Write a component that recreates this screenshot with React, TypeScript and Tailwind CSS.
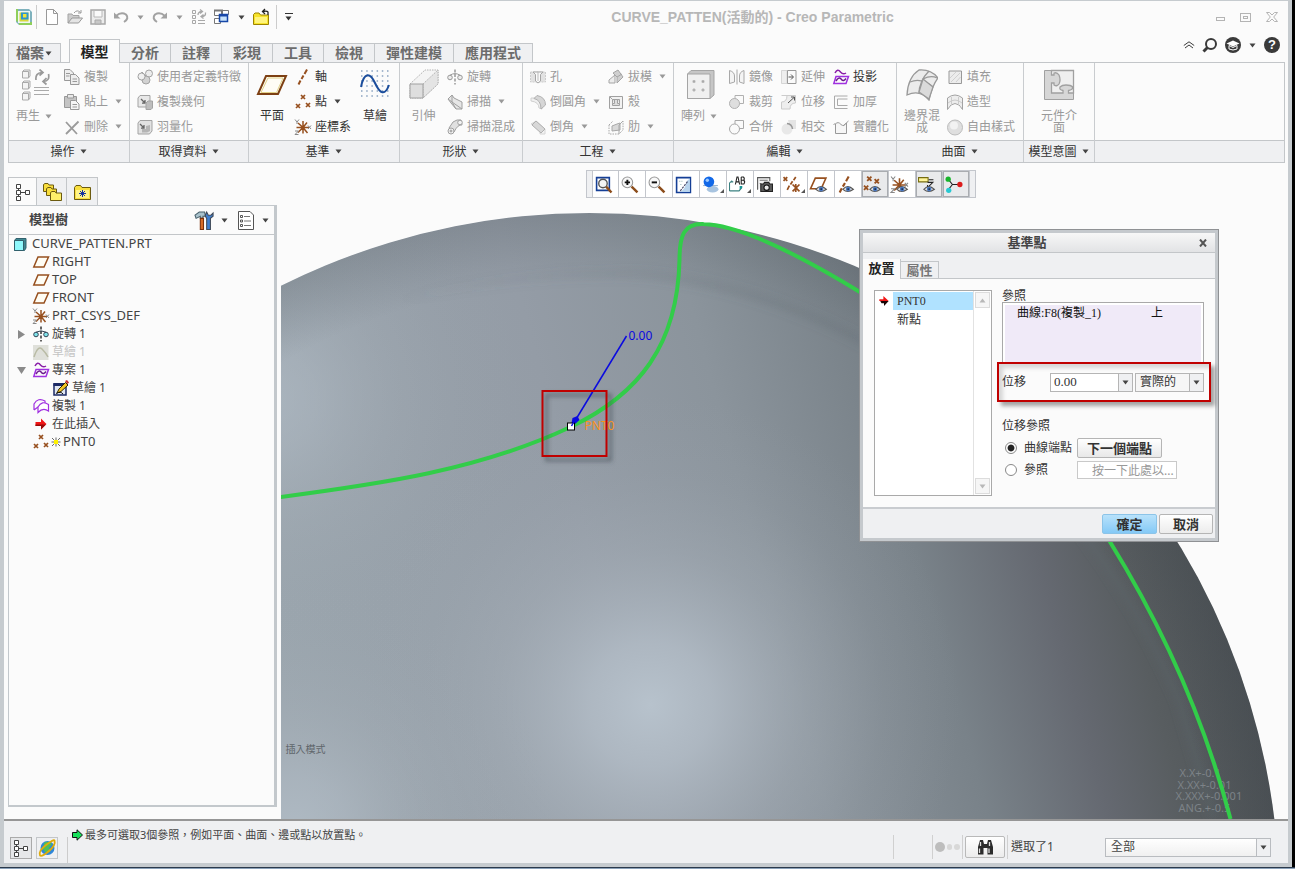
import type { ReactNode } from "react";

const G = "#a3a3a3";
const BROWN = "#97501f";
const PURPLE = "#a030e0";

/* ---------- icons, 16px grid ---------- */

const eye = (
  <g>
    <path d="M5.500 12.500Q10 7.500 15.500 12.500Q10 16.500 5.500 12.500Z" fill="#e4e4e4" stroke="#555" strokeWidth="1" />
    <circle cx="10.500" cy="12.300" r="2.200" fill="#4a78c0" />
    <circle cx="10.500" cy="12.300" r="0.800" fill="#123" />
  </g>
);

const csysLines = (
  <g fill="none" strokeWidth="1.500">
    <path d="M8 8.500H14M8 8.500L3 4M8 8.500L3 13.500M8 8.500V2M8 8.500L12 3.500M8 8.500L12.500 14M8 8.500H1.500M8 8.500V14.500" stroke={BROWN} />
    <path d="M0 0.500L2 3L4 0.500M2 3V5M0 12H3.500L0 15.500H3.500M13 6.500L16 10M16 6.500L13 10" stroke="#888" strokeWidth="1" />
  </g>
);

const points = (color: string) => (
  <path d="M6 1L10 5M10 1L6 5M1 10L5 14M5 10L1 14M11 9L15 13M15 9L11 13" stroke={color} strokeWidth="1.700" fill="none" />
);

const cubeWithArrow = (
  <g>
    <path d="M1 4L3 1.500H13V11L11 13H1Z" fill="#e8e8e8" stroke={G} />
    <path d="M4 5L8 9M8 6V9.200H5" stroke="#666" fill="none" strokeWidth="1.300" />
    <path d="M9 9L11 7H15.500V14L14 15.500H9Z" fill="#bdbdbd" stroke={G} />
  </g>
);

const ICONS: Record<string, ReactNode> = {
  app: (
    <g>
      <path d="M0 0H13L16 3V16H3L0 13Z" fill="#7fb2bd" />
      <path d="M0 0H2V13L0 12ZM3 13H16V16H3Z" fill="#8fcf5a" />
      <path d="M2 2H14V14H2Z" fill="#eef6f4" />
      <path d="M3.500 3.500H12.500V12.500H3.500Z" fill="#d9d93c" />
      <path d="M5 3.500H12.500V10.500H5Z" fill="#2d97cc" />
      <path d="M7 5H10.500V8.500H7Z" fill="#f3e338" />
    </g>
  ),
  newFile: <path d="M2.500 0.500H9.500L13.500 4.500V15.500H2.500ZM9.500 0.500V4.500H13.500" fill="#fff" stroke="#999" />,
  open: (
    <g>
      <path d="M1 14V5H5L6 6.500H12V9" fill="#ccc" stroke={G} />
      <path d="M1 14L5 9H15.500L11.500 14Z" fill="#e4e4e4" stroke="#999" />
      <path d="M7 4Q10 0 13.500 3.500M14 1V4H11" fill="none" stroke="#999" />
    </g>
  ),
  save: (
    <g>
      <path d="M1 1H15V15H1Z" fill="#ececec" stroke="#a8a8a8" strokeWidth="1.500" />
      <path d="M4 1.500H12V8H4Z" fill="#fafafa" stroke="#b8b8b8" />
      <path d="M5 11H11V15H5Z" fill="#c8c8c8" stroke="#aaa" />
    </g>
  ),
  undo: (
    <g>
      <path d="M3 7Q8 2.500 13 5.500Q16.500 9.500 11 13" fill="none" stroke="#a2a2a2" strokeWidth="2" />
      <path d="M1 3.500V9.500H7.500Z" fill="#a2a2a2" />
    </g>
  ),
  redo: (
    <g>
      <path d="M13 7Q8 2.500 3 5.500Q-0.500 9.500 5 13" fill="none" stroke="#a2a2a2" strokeWidth="2" />
      <path d="M15 3.500V9.500H8.500Z" fill="#a2a2a2" />
    </g>
  ),
  regenSmall: (
    <g fill="none" stroke="#a8a8a8">
      <path d="M1.500 1.500H4.500V4.500H1.500ZM1.500 6.500H4.500V9.500H1.500ZM1.500 11.500H4.500V14.500H1.500ZM7 11.500H14M7 14.500H14" />
      <path d="M7 6Q7 2.500 11 2.500M9 0.500L11.500 2.500L9 4.500M14.500 3.500Q15 7.500 10.500 7.500M12.500 5.500L10 7.500L12.500 9.500" strokeWidth="1.300" />
    </g>
  ),
  windows: (
    <g>
      <path d="M0.500 1.500H8.500V6.500H0.500ZM7.500 1.500H14.500V5.500H7.500ZM0.500 9.500H6.500V14.500H0.500Z" fill="#fff" stroke="#777" />
      <path d="M0 0.500H9V2.500H0Z" fill="#777" />
      <path d="M5.500 5.500H13.500V12.500H5.500Z" fill="#c7e2fa" stroke="#1747a8" strokeWidth="1.500" />
      <path d="M5 5H14V7.500H5Z" fill="#1747a8" />
    </g>
  ),
  folderBack: (
    <g>
      <path d="M0.500 15.500V5.500L2 4H6L7.500 6H15.500V15.500Z" fill="#f7e32a" stroke="#9c8300" />
      <path d="M2 8H14V14H2Z" fill="#fff47d" />
      <path d="M15 6V3Q14 1.500 10 2.500M12 0L9.500 2.600L12 5" fill="none" stroke="#222" strokeWidth="1.300" />
    </g>
  ),
  copy: (
    <g fill="#eee" stroke="#999">
      <path d="M0.500 0.500H6L9.500 4V11.500H0.500Z" />
      <path d="M6.500 5.500H11.500L15 9V15.500H6.500Z" />
      <path d="M2 4.500H6M2 7H5.500M8.500 10H13M8.500 12.500H13" />
    </g>
  ),
  paste: (
    <g stroke="#999">
      <path d="M0.500 2.500H12.500V13.500H0.500Z" fill="#c4c4c4" />
      <path d="M3.500 4V0.500H9.500V4Z" fill="#e8e8e8" />
      <path d="M6.500 6.500H11.500L15 10V15.500H6.500Z" fill="#f6f6f6" />
      <path d="M8.500 10.500H13M8.500 13H13" />
    </g>
  ),
  remove: <path d="M2 3L13 15M14.500 2.500L2 15" stroke="#9b9b9b" strokeWidth="1.800" fill="none" />,
  udf: (
    <g stroke={G}>
      <path d="M1 9L5 3L9 7L7 12Z" fill="#ddd" />
      <circle cx="12" cy="4.500" r="3.500" fill="#ececec" />
      <circle cx="9" cy="11" r="4" fill="#d2d2d2" />
      <circle cx="4.500" cy="7.500" r="3.500" fill="#f0f0f0" />
    </g>
  ),
  copyGeom: cubeWithArrow,
  shrink: (
    <g>
      <path d="M1 4L3 1.500H15V12L12.500 15H1Z" fill="#e2e2e2" stroke={G} />
      <path d="M3 5L7 9M7 6V9.200H4" stroke="#666" fill="none" strokeWidth="1.300" />
      <path d="M9 7L13 6V12L10 13.500H5V10H9Z" fill="#b5b5b5" />
    </g>
  ),
  axis: <path d="M12 0.500L9.500 5M8.500 6.500L6.500 10M5.500 11.500L3.500 15.500" stroke={BROWN} strokeWidth="2" fill="none" />,
  points: points(BROWN),
  csys: csysLines,
  plane: <path d="M5 3H15.500L11 13H0.800Z" fill="#fffdf4" stroke={BROWN} strokeWidth="1.500" />,
  revolve: (
    <g fill="#ececec" stroke="#999">
      <path d="M8 0.500V15.500" strokeDasharray="3 1.500" strokeWidth="1.500" />
      <circle cx="3" cy="8.500" r="2.300" />
      <circle cx="13" cy="8.500" r="2.300" />
      <path d="M3 6.200Q8 3 13 6.200" fill="none" />
    </g>
  ),
  revolveTree: (
    <g fill="#7fe3ea" stroke="#345">
      <path d="M8 0.500V15.500" strokeDasharray="3 1.500" strokeWidth="1.500" stroke="#333" />
      <circle cx="3" cy="8.500" r="2.300" />
      <circle cx="13" cy="8.500" r="2.300" />
      <path d="M3 6.200Q8 3.500 13 6.200" fill="none" />
    </g>
  ),
  sweep: (
    <g stroke="#a0a0a0">
      <path d="M1 5L5 1L7 4L15 8V15H9L4 9Z" fill="#e6e6e6" />
      <path d="M5 1V8L9 15M5 8L15 15M1 5L5 8" fill="none" />
    </g>
  ),
  sweptBlend: (
    <g stroke="#a0a0a0">
      <path d="M2 9L6 3Q10 0 14 1L15 6Q11 5 7 13Z" fill="#e0e0e0" />
      <circle cx="4" cy="12" r="3" fill="#f3f3f3" />
      <circle cx="4" cy="12" r="1" fill="#ccc" />
      <circle cx="13" cy="3.500" r="2.300" fill="#f3f3f3" />
    </g>
  ),
  hole: (
    <g>
      <path d="M0.500 3H15.500V13H0.500Z" fill="#e2e2e2" stroke="#ccc" strokeDasharray="2 1" />
      <path d="M3 3H13L10.500 5.500V12L8 14L5.500 12V5.500Z" fill="#fafafa" stroke="#a5a5a5" />
      <path d="M8 3V12" stroke="#bbb" />
    </g>
  ),
  round: (
    <g stroke="#b0b0b0">
      <path d="M1 4H8Q12 6 12 15L9 14Q9 8 1 7Z" fill="#f0f0f0" stroke="#d0d0d0" />
      <path d="M7 1.500Q15.500 3 15.500 11L11 15Q11 6 4 4.500Z" fill="#d6d6d6" />
    </g>
  ),
  chamfer: (
    <g stroke="#b0b0b0">
      <path d="M1 5L6 2L15 10V15H10V10L5 6Z" fill="#f2f2f2" stroke="#d6d6d6" />
      <path d="M6 2L15 10L11 14L2 6Z" fill="#d8d8d8" />
    </g>
  ),
  draft: (
    <g stroke="#a5a5a5">
      <path d="M1 11L7 6V14H1Z" fill="#ececec" />
      <path d="M5 4L10 1L15 8L9 14V8Z" fill="#cfcfcf" />
      <path d="M5 4L9 8L14 5" fill="none" />
    </g>
  ),
  shell: (
    <g fill="#f2f2f2" stroke="#a0a0a0">
      <path d="M1.500 2.500H14.500V14.500H1.500Z" />
      <path d="M4.500 5.500H11.500V11.500H4.500Z" fill="#dcdcdc" />
      <path d="M6.500 5.500V9.500H4.500M9.500 5.500V9.500H11.500M2 3L4.500 5.500" />
    </g>
  ),
  rib: (
    <g stroke="#a8a8a8" fill="none">
      <path d="M1 6L5 2M1 6V15H11L15 11V2" strokeDasharray="1.500 1" />
      <path d="M4 12V7L9 5L12 4V11Z" fill="#d8d8d8" />
      <path d="M11 15V6L15 2" />
    </g>
  ),
  mirror: (
    <g stroke="#a8a8a8" fill="#f4f4f4">
      <path d="M0.500 1.500Q5.500 3 5.500 7V13L0.500 14.500ZM15 1.500Q10.500 3 10.500 7V13L15 14.500Z" />
      <path d="M8 0.500V15.500" />
    </g>
  ),
  trim: (
    <g stroke="#b0b0b0">
      <path d="M6 5V1.500H14.500V9.500H10" fill="#fafafa" />
      <circle cx="5.500" cy="9.500" r="5" fill="#dedede" />
    </g>
  ),
  merge: (
    <g stroke="#a8a8a8" fill="#fafafa">
      <path d="M6 5V1.500H14.500V9.500H10" />
      <circle cx="5.500" cy="10" r="5" />
    </g>
  ),
  extend: (
    <g>
      <path d="M0.500 1.500H6V14.500H0.500Z" fill="#eee" stroke="#d5d5d5" />
      <path d="M6.500 1.500H15V14.500H6.500Z" fill="#fafafa" stroke="#999" />
      <path d="M7.500 8H12M10 5.500L12.500 8L10 10.500" stroke="#555" fill="none" />
    </g>
  ),
  offset: (
    <g>
      <path d="M0.500 1.500H14.500V9Q9 9 9 15H0.500V8Q6 8 6 1.500" fill="#eee" stroke="#ccc" />
      <path d="M7 9L13 3.500M10 3H13.500V6.500" stroke="#555" fill="none" />
    </g>
  ),
  intersect: (
    <g>
      <path d="M7 1H15V10H9Z" fill="#e4e4e4" />
      <circle cx="6" cy="10" r="5.500" fill="#e8e8e8" />
      <path d="M6 4.500Q11 5 11.500 10" stroke="#999" fill="none" strokeWidth="1.500" />
    </g>
  ),
  project: (
    <g fill="none" stroke={PURPLE} strokeWidth="1.500">
      <path d="M2 4Q4.500 -1 7.500 3Q10 6 13 4" stroke="#8a1fa8" />
      <path d="M3 7.500H15.500L13 14.500H0.800Z" />
      <path d="M3 12Q6 7 8.500 10.500Q10.500 13 13 9.500" stroke="#6b1a8c" />
    </g>
  ),
  thicken: <path d="M14.500 2H1.500V14.500H14.500M14.500 5H4.500V11.500H14.500" fill="none" stroke="#aaa" />,
  solidify: <path d="M2.500 14.500V5Q5 2 8 5.500Q10.500 8 13.500 4V14.500ZM0.500 6L2.500 4M10 7L15.500 2" fill="#f6f6f6" stroke="#999" />,
  fill: (
    <g>
      <path d="M2 2H14.500V14.500H2Z" fill="#ececec" stroke="#999" />
      <path d="M3 9L9 3M4 13L13 4M9 13L13.500 8" stroke="#d0d0d0" />
    </g>
  ),
  style: (
    <g stroke="#a3a3a3">
      <path d="M0.500 4Q8 -2 15.500 4V15.500Q13 12 12 11Q8 8 4 11L0.500 15.500Z" fill="#ededed" />
      <path d="M4.500 3V11M11.500 3V11M1 9Q8 3 15 9" fill="none" stroke="#ccc" />
    </g>
  ),
  freestyle: (
    <g>
      <circle cx="8" cy="8.500" r="7.500" fill="#dfdfdf" stroke="#bcbcbc" />
      <circle cx="7" cy="6.500" r="4" fill="#f2f2f2" />
    </g>
  ),
  tree: (
    <g fill="#fff" stroke="#444">
      <path d="M3.500 5V12M5 8.500H10" />
      <path d="M1.500 0.500H5.500V4.500H1.500ZM1.500 6.500H5.500V10.500H1.500ZM10.500 6.500H14.500V10.500H10.500ZM1.500 12.500H5.500V16.500H1.500Z" />
    </g>
  ),
  folders: (
    <g fill="#f8dd3c" stroke="#6b5a10">
      <path d="M-0.500 7.500V0.500L1 -0.500H4L5 1H9.500V7.500Z" />
      <path d="M2.500 11.500V4.500L4 3.500H7L8 5H12.500V11.500Z" />
      <path d="M6.500 16.500V8.500L8 7.500H11L12 9H17.500V16.500Z" fill="#fff06a" />
    </g>
  ),
  favorites: (
    <g>
      <path d="M0.500 15.500V3.500L2 1.500H6.500L8 3.500H16.500V15.500Z" fill="#f9df3e" stroke="#6b5a10" />
      <path d="M2 6H15V14H2Z" fill="#fff48a" />
      <path d="M8.500 6V13M5 9.500H12M6 7L11 12M11 7L6 12" stroke="#1533a0" />
    </g>
  ),
  part: (
    <g stroke="#31606c">
      <path d="M1.500 4.500L3 2.500H13V12L11.500 14.500H1.500Z" fill="#3f8791" />
      <path d="M1.500 4.500H10.500V14.500H1.500Z" fill="#8ff8fb" />
    </g>
  ),
  sketchOff: (
    <g>
      <path d="M0 1H15.500V16H0Z" fill="#dfe0da" />
      <path d="M1 13Q5 1 9 5T15 13" stroke="#b9bba5" strokeWidth="1.500" fill="none" />
    </g>
  ),
  sketchEdit: (
    <g>
      <path d="M1 4H13V15H1Z" fill="#dfe6f2" stroke="#1c2b66" strokeWidth="1.500" />
      <path d="M0.500 3H13.500V6H0.500Z" fill="#1c2b66" />
      <path d="M4 13L6 9L12.500 2.500L15 5L8 11.500Z" fill="#f5c623" stroke="#332800" />
      <path d="M12 1L14 0L16 2.500L14.500 4Z" fill="#c83232" />
      <path d="M3 13.500Q8 11 10 14" stroke="#111" fill="none" />
    </g>
  ),
  copyQuilt: (
    <g fill="none" stroke={PURPLE} strokeWidth="1.200">
      <path d="M1 12V6Q5 -1 12 3V5M1 12L5 9" />
      <path d="M5 14.500V9Q9 2 15.500 6.500V13Q10 9 5 14.500Z" fill="#fff" />
    </g>
  ),
  insertArrow: (
    <g>
      <path d="M2.500 6H8V2.500L13.500 8L8 13.500V10H2.500Z" fill="#f01616" />
      <path d="M2.500 8.500H13L8 13.500V10H2.500Z" fill="#9a0808" />
    </g>
  ),
  activeArrow: (
    <g>
      <path d="M0.500 5H7V0L15.500 8H0.500Z" fill="#f01616" />
      <path d="M2 8H15.500L8 16V11.500H4Z" fill="#180404" />
    </g>
  ),
  hammers: (
    <g>
      <path d="M0 3L4 0H9L10 4H7.500V6H5V4L1 6Z" fill="#a9c2cc" stroke="#48606c" />
      <path d="M5 6H8V16.500H5Z" fill="#d86c28" stroke="#7c3008" />
      <path d="M11 6V16.500H14.500V6L17 4V1L15 3H12.500L11 0L9.500 3.500Z" fill="#3f7fd0" stroke="#404a58" />
    </g>
  ),
  listDoc: (
    <g>
      <path d="M1.500 -0.500H13L16.500 3V17.500H1.500Z" fill="#fff" stroke="#555" />
      <path d="M7 4.500H13M7 9H14M7 13.500H14" stroke="#777" />
      <path d="M3.500 3.500H5.500V5.500H3.500ZM3.500 8H5.500V10H3.500ZM3.500 12.500H5.500V14.500H3.500Z" fill="none" stroke="#555" />
    </g>
  ),
  zoomFit: (
    <g>
      <path d="M1.500 1.500H13.500V13.500H1.500Z" fill="#fff" stroke="#153f96" strokeWidth="1.500" />
      <circle cx="7.500" cy="7" r="4" fill="#f4f4f4" stroke="#555" strokeWidth="1.300" />
      <path d="M10.500 10L15.500 15.500" stroke="#8c4d1b" strokeWidth="2.300" />
    </g>
  ),
  zoomIn: (
    <g>
      <circle cx="6" cy="6" r="5" fill="#f8f8f8" stroke="#999" />
      <path d="M3.500 6H8.500M6 3.500V8.500" stroke="#111" strokeWidth="1.800" />
      <path d="M10 10L15.500 15.500" stroke="#8c4d1b" strokeWidth="2.300" />
    </g>
  ),
  zoomOut: (
    <g>
      <circle cx="6" cy="6" r="5" fill="#f8f8f8" stroke="#999" />
      <path d="M3.500 6H8.500" stroke="#111" strokeWidth="1.800" />
      <path d="M10 10L15.500 15.500" stroke="#8c4d1b" strokeWidth="2.300" />
    </g>
  ),
  repaint: (
    <g>
      <path d="M1.500 1.500H14.500V15.500H1.500Z" fill="#fff" stroke="#153f96" strokeWidth="1.500" />
      <path d="M14 2V15H5Q10 12 11 5Z" fill="#b8d4ee" />
      <path d="M4 5H8M5 8H7" stroke="#9bb" strokeDasharray="1 1" />
      <path d="M5 14L12 5" stroke="#446" strokeDasharray="2 1" />
    </g>
  ),
  shade: (
    <g>
      <ellipse cx="10" cy="12.500" rx="5.500" ry="3" fill="#a8c4e0" />
      <path d="M1 9H15" stroke="#9bb4cc" />
      <circle cx="6.500" cy="5.500" r="5" fill="#1168e8" />
      <circle cx="5" cy="4" r="1.600" fill="#9cc9ff" />
    </g>
  ),
  saved: (
    <g>
      <path d="M0.500 14V6.500L3 4.500M0.500 6.500L2 5.500H4M0.500 14H9.500L12 11" fill="none" stroke="#3b8181" />
      <path d="M10 13V9.500H12.500V11Z" fill="#1a9696" />
      <path d="M6 8L7.500 1H8.500L10 8M7 5.500H9.500M11.500 1V7.500H14Q15.500 5.500 14 4H12M14 4Q15 2 13.500 1H11.500" stroke="#222" fill="none" />
    </g>
  ),
  viewMgr: (
    <g>
      <path d="M1.500 13V1.500H13V5" fill="#f2f2f2" stroke="#555" />
      <path d="M3.500 4H11M3.500 7H5" stroke="#777" />
      <path d="M4.500 7.500H7L8 6H12L13 7.500H15.500V14.500H4.500Z" fill="#5b5b5b" stroke="#222" />
      <circle cx="10" cy="11" r="2.500" fill="#e8e8e8" stroke="#111" />
    </g>
  ),
  datumAll: (
    <g stroke={BROWN} strokeWidth="1.600" fill="none">
      <path d="M0.500 1L4 4.500M4 1L0.500 4.500M12 1L10 4M9 5L7 8M6 9L4 13" />
      <path d="M9 8L15.500 14.500M15.500 8L9 14.500M12 7.500V15" />
    </g>
  ),
  planeEye: (
    <g>
      <path d="M5 2H15L10.500 12H0.500Z" fill="none" stroke={BROWN} strokeWidth="1.500" />
      {eye}
    </g>
  ),
  axisEye: (
    <g>
      <path d="M11 0.500L8.500 5M7.500 6.500L5.500 10M4.500 11.500L2.500 15.500" stroke={BROWN} strokeWidth="2" fill="none" />
      {eye}
    </g>
  ),
  pointsEye: (
    <g>
      <path d="M3 0.500L7 4.500M7 0.500L3 4.500M0 9L4 13M4 9L0 13M10 3L14 7M14 3L10 7" stroke={BROWN} strokeWidth="1.700" fill="none" />
      {eye}
    </g>
  ),
  csysEye: (
    <g>
      {csysLines}
      {eye}
    </g>
  ),
  annoEye: (
    <g>
      <path d="M0.500 1.500H9.500V5.500H0.500Z" fill="#fff59a" stroke="#776d10" />
      <path d="M10 3.500H14.500M9 6H14L9 11M9 8.500V11H12" stroke="#222" fill="none" />
      {eye}
    </g>
  ),
  spin: (
    <g>
      <path d="M3 3L7 8H13M7 8L3 13" stroke="#222" fill="none" />
      <circle cx="3" cy="3" r="2.500" fill="#18b52c" />
      <circle cx="14" cy="8" r="2.500" fill="#dc1c1c" />
      <circle cx="3.500" cy="13.500" r="2.500" fill="#28c9d2" />
    </g>
  ),
  globe: (
    <g>
      <circle cx="8.500" cy="8" r="7" fill="#2f86d8" />
      <path d="M5 3Q9 0 13 4L10 8L11 12Q6 14 4 9Z" fill="#4fbf5a" />
      <path d="M1 15.500Q-1 11 7 5T15.500 0.500Q17 5 10 11T1 15.500Z" fill="none" stroke="#e0ac0c" strokeWidth="1.800" />
    </g>
  ),
  binoculars: (
    <g>
      <path d="M1 8L3 1H6L7 5H10L11 1H14L16 8V15.500H10.500V9H6.500V15.500H1Z" fill="#2b2b2b" />
      <path d="M2.500 9.500V14M3.500 3V7M12 9.500V14M12.500 3V7" stroke="#ddd" strokeWidth="1.300" />
    </g>
  ),
};

const BIG_ICONS: Record<string, ReactNode> = {
  regen: (
    <g fill="#f4f4f4" stroke="#aaa">
      <path d="M3.500 2.500L5 1H11V7L9.500 9H3.500ZM3.500 13.500L5 12H11V18L9.500 20H3.500ZM3.500 24.500L5 23H11V29L9.500 31H3.500Z" />
      <path d="M3.500 2.500H9.500V9M3.500 13.500H9.500V20M3.500 24.500H9.500V31M15 18.500H30M15 21.500H30M15 25.500H30" fill="none" />
      <path d="M17 11Q16 4 23 3.500M20.500 0.500L24 3.500L20.500 6.500M29.500 5Q31 12 24.500 12.500M27.500 9L24 12.500L27.500 15.500" fill="none" stroke="#999" strokeWidth="1.700" />
    </g>
  ),
  plane: (
    <g>
      <path d="M10 7H30L22 25H2Z" fill="#fffdf6" stroke="#7d4014" strokeWidth="2" />
      <path d="M12 9H27L20.500 23.500H5Z" fill="none" stroke="#e2d28a" strokeWidth="1" />
    </g>
  ),
  sketch: (
    <g>
      {[2, 7, 12, 17, 22, 27].map((y) => (
        <path key={y} d={`M2 ${y}H31`} stroke="#8aa3c0" strokeWidth="1.500" strokeDasharray="1.500 3.700" />
      ))}
      <path d="M2 18C5 3 11 3 16 14S26 27 30 16" fill="none" stroke="#1b4d9c" strokeWidth="2" />
    </g>
  ),
  extrude: (
    <g stroke="#b3b3b3">
      <path d="M2 15L17 1H30V15L15 29H2Z" fill="#f4f4f4" strokeDasharray="1.500 1" />
      <path d="M15 15L30 1V15L15 29Z" fill="#e4e4e4" strokeDasharray="1.500 1" />
      <path d="M2 15H15V29H2Z" fill="#dedede" stroke="#a0a0a0" />
    </g>
  ),
  pattern: (
    <g stroke="#a5a5a5">
      <path d="M3.500 5L7 1.500H30V26L26 29.500H3.500Z" fill="#c6c6c6" />
      <path d="M3.500 5H26V29.500H3.500Z" fill="#f0f0f0" />
      <path d="M9 11.500H11V13.500H9ZM18 11.500H20V13.500H18ZM9 20H11V22H9ZM18 20H20V22H18Z" fill="#999" stroke="#bbb" />
    </g>
  ),
  boundary: (
    <g stroke="#999" fill="#ececec" strokeWidth="1.300">
      <path d="M1 26Q2 8 13 1Q25 0 32 9Q26 17 23 31Q14 20 1 26Z" />
      <path d="M4 13Q15 8 27 18M13 25Q13 12 23 2M17 10Q25 6 31 9" fill="none" />
      <path d="M17 10L27 18L23 30L13 23Z" fill="#dadada" />
    </g>
  ),
  component: (
    <g stroke="#a0a0a0">
      <path d="M1.500 1.500H30.500V30.500H1.500Z" fill="#d6d6d6" />
      <path
        d="M8.500 1.500V6H11V4Q14 3 16 6Q18 11 16 15Q14 18 11 16V14H8.500V24H20V21.500Q16 21 17 18Q19 16 23 16Q28 16 29.500 18Q30 21 25.500 21.500V24H30.500V1.500Z"
        fill="#efefef"
        strokeWidth="1.300"
      />
    </g>
  ),
};

function Icon({ name, size = "size-4" }: { name: string; size?: string }) {
  return (
    <svg viewBox="0 0 16 16" className={`${size} shrink-0 overflow-visible`} aria-hidden="true">
      {ICONS[name]}
    </svg>
  );
}

function Caret({ className = "text-[#444]" }: { className?: string }) {
  return (
    <svg viewBox="0 0 9 5" className={`h-[5px] w-[9px] shrink-0 ${className}`} aria-hidden="true">
      <path d="M1.500 0.500H7.500L4.500 4.500Z" fill="currentColor" />
    </svg>
  );
}

/* ---------- ribbon ---------- */

type Item = { icon: string; label: string; caret?: boolean; on?: boolean };

function Big({ icon, lines, caret, on, width }: { icon: string; lines: string[]; caret?: boolean; on?: boolean; width: string }) {
  return (
    <button className={`flex shrink-0 flex-col items-center justify-start pt-[5px] ${width} ${on ? "text-[#333]" : "text-[#999]"}`}>
      <svg viewBox="0 0 32 32" className="size-8 shrink-0" aria-hidden="true">
        {BIG_ICONS[icon]}
      </svg>
      <span className="mt-[9px] flex items-center gap-1 whitespace-nowrap leading-3">
        <span>
          {lines.map((line) => (
            <span key={line} className="block">{line}</span>
          ))}
        </span>
        {caret && <Caret className={on ? "text-[#444]" : "text-[#999]"} />}
      </span>
    </button>
  );
}

function Column({ items, width = "" }: { items: Item[]; width?: string }) {
  return (
    <div className={`flex shrink-0 flex-col ${width}`}>
      {items.map((item) => (
        <button key={item.label} className={`flex h-[25px] items-center gap-1 whitespace-nowrap ${item.on ? "text-[#333]" : "text-[#999]"}`}>
          <Icon name={item.icon} />
          <span>{item.label}</span>
          {item.caret && (
            <span className="pl-0.5">
              <Caret className={item.on ? "text-[#444]" : "text-[#999]"} />
            </span>
          )}
        </button>
      ))}
    </div>
  );
}

function Group({ title, width, children }: { title: string; width: string; children: ReactNode }) {
  return (
    <section className={`flex shrink-0 flex-col border-r border-[#c9cccf] ${width}`}>
      <div className="flex h-[77px] pt-px">{children}</div>
      <button className="flex h-[22px] items-center justify-center gap-1 border-t border-[#c3c6c9] bg-[#eff0f2] whitespace-nowrap text-[#333]">
        {title}
        <Caret />
      </button>
    </section>
  );
}

function Ribbon() {
  return (
    <div className="mr-[3px] ml-1 flex border border-[#c3c6c9] bg-[#fbfbfb] text-xs">
      <Group title="操作" width="w-[121px]">
        <Big icon="regen" lines={["再生"]} caret width="w-[55px] pr-1" />
        <Column
          items={[
            { icon: "copy", label: "複製" },
            { icon: "paste", label: "貼上", caret: true },
            { icon: "remove", label: "刪除", caret: true },
          ]}
        />
      </Group>
      <Group title="取得資料" width="w-[119px]">
        <Column
          width="pl-[7px]"
          items={[
            { icon: "udf", label: "使用者定義特徵" },
            { icon: "copyGeom", label: "複製幾何" },
            { icon: "shrink", label: "羽量化" },
          ]}
        />
      </Group>
      <Group title="基準" width="w-[151px]">
        <Big icon="plane" lines={["平面"]} on width="w-[46px]" />
        <Column
          width="w-14"
          items={[
            { icon: "axis", label: "軸", on: true },
            { icon: "points", label: "點", caret: true, on: true },
            { icon: "csys", label: "座標系", on: true },
          ]}
        />
        <Big icon="sketch" lines={["草繪"]} on width="w-12" />
      </Group>
      <Group title="形狀" width="w-[123px]">
        <Big icon="extrude" lines={["引伸"]} width="w-[47px]" />
        <Column
          items={[
            { icon: "revolve", label: "旋轉" },
            { icon: "sweep", label: "掃描", caret: true },
            { icon: "sweptBlend", label: "掃描混成" },
          ]}
        />
      </Group>
      <Group title="工程" width="w-[151px]">
        <Column
          width="w-[85px] pl-[7px]"
          items={[
            { icon: "hole", label: "孔" },
            { icon: "round", label: "倒圓角", caret: true },
            { icon: "chamfer", label: "倒角", caret: true },
          ]}
        />
        <Column
          items={[
            { icon: "draft", label: "拔模", caret: true },
            { icon: "shell", label: "殼" },
            { icon: "rib", label: "肋", caret: true },
          ]}
        />
      </Group>
      <Group title="編輯" width="w-[223px]">
        <Big icon="pattern" lines={["陣列"]} caret width="w-[55px] pr-1" />
        <Column
          width="w-[52px]"
          items={[
            { icon: "mirror", label: "鏡像" },
            { icon: "trim", label: "裁剪" },
            { icon: "merge", label: "合併" },
          ]}
        />
        <Column
          width="w-[52px]"
          items={[
            { icon: "extend", label: "延伸" },
            { icon: "offset", label: "位移" },
            { icon: "intersect", label: "相交" },
          ]}
        />
        <Column
          items={[
            { icon: "project", label: "投影", on: true },
            { icon: "thicken", label: "加厚" },
            { icon: "solidify", label: "實體化" },
          ]}
        />
      </Group>
      <Group title="曲面" width="w-[127px]">
        <Big icon="boundary" lines={["邊界混", "成"]} width="w-[50px]" />
        <Column
          items={[
            { icon: "fill", label: "填充" },
            { icon: "style", label: "造型" },
            { icon: "freestyle", label: "自由樣式" },
          ]}
        />
      </Group>
      <Group title="模型意圖" width="w-[71px]">
        <Big icon="component" lines={["元件介", "面"]} width="w-[70px]" />
      </Group>
      <div className="flex flex-1 flex-col">
        <div className="flex-1" />
        <div className="h-[22px] border-t border-[#c3c6c9] bg-[#eff0f2]" />
      </div>
    </div>
  );
}

/* ---------- title bar and tabs ---------- */

function Tool({ name, label }: { name: string; label: string }) {
  return (
    <button aria-label={label} className="shrink-0">
      <Icon name={name} />
    </button>
  );
}

function TitleBar() {
  return (
    <header className="flex h-8 items-center pr-2.5 pl-3">
      <div className="flex items-center gap-[7px]">
        <span className="flex h-6 items-center border-r border-[#ccc] pr-1">
          <Icon name="app" />
        </span>
        <Tool name="newFile" label="新建" />
        <Tool name="open" label="開啟" />
        <Tool name="save" label="儲存" />
        <Tool name="undo" label="復原" />
        <Caret className="text-[#999]" />
        <Tool name="redo" label="重做" />
        <Caret className="text-[#999]" />
        <Tool name="regenSmall" label="再生" />
        <Tool name="windows" label="視窗" />
        <Caret />
        <Tool name="folderBack" label="關閉" />
        <span className="h-6 border-r border-[#ccc]" />
        <button aria-label="自訂" className="flex flex-col items-center gap-0.5">
          <span className="h-px w-2 bg-[#333]" />
          <Caret className="text-[#333]" />
        </button>
      </div>
      <h1 className="flex-1 pr-1 text-center font-['Liberation_Sans','Noto_Sans_CJK_TC',sans-serif] text-[14px] font-bold text-[#b7b7b7]">
        CURVE_PATTEN(活動的) - Creo Parametric
      </h1>
      <div className="flex items-center gap-[15px] text-[#b4b4b4]">
        <button aria-label="最小化" className="mt-1 h-1 w-[9px] border border-current" />
        <button aria-label="最大化" className="flex h-[9px] w-[11px] items-center justify-center border border-current">
          <span className="h-[3px] w-[5px] border border-current" />
        </button>
        <button aria-label="關閉視窗">
          <svg viewBox="0 0 12 10" className="h-2.5 w-3" fill="none" stroke="currentColor">
            <path d="M0.500 0.500H3.500L6 3L8.500 0.500H11.500L7.700 5L11.500 9.500H8.500L6 7L3.500 9.500H0.500L4.300 5Z" />
          </svg>
        </button>
      </div>
    </header>
  );
}

const TABS = ["分析", "註釋", "彩現", "工具", "檢視", "彈性建模", "應用程式"];

function TabBar() {
  return (
    <nav className="-mb-px flex h-[30px] items-end pr-2 pl-1 text-[14px] font-bold text-[#6c6c6c]">
      <button className="mr-2 flex h-5 w-[53px] items-center justify-center border border-[#c3c6c9] bg-[#eff0f2] leading-4">
        檔案
        <Caret />
      </button>
      <button className="relative h-6 w-[51px] border border-b-0 border-[#c3c6c9] bg-[#fbfbfb] leading-5 text-[#222]">模型</button>
      {TABS.map((tab) => (
        <button key={tab} className="h-5 border border-l-0 border-[#c3c6c9] bg-[#eff0f2] px-[11px] leading-4">
          {tab}
        </button>
      ))}
      <div className="mb-2.5 ml-auto flex items-center gap-[7px] text-[#3a3a3a]">
        <button aria-label="最小化功能區">
          <svg viewBox="0 0 12 8" className="h-2 w-3" fill="none" stroke="currentColor">
            <path d="M0.800 4.500L6 0.800L11.200 4.500M2 7L6 4L10 7" />
          </svg>
        </button>
        <button aria-label="搜尋">
          <svg viewBox="0 0 16 16" className="size-4" fill="none" stroke="currentColor">
            <circle cx="9" cy="7" r="5" strokeWidth="2" />
            <path d="M5.500 10.500L1.500 14.500" strokeWidth="3" />
          </svg>
        </button>
        <button aria-label="學習" className="flex items-center gap-[7px]">
          <svg viewBox="0 0 16 16" className="size-4">
            <circle cx="8" cy="8" r="8" fill="currentColor" />
            <path d="M1.500 6.500L8 3.500L14.500 6.500L8 9.500Z" fill="#fff" />
            <path d="M4 8.500V12Q8 14 12 12V8.500L8 10.500Z" fill="none" stroke="#fff" />
          </svg>
          <Caret />
        </button>
        <button aria-label="說明" className="size-4 rounded-full bg-[#3a3a3a] font-['Liberation_Sans',sans-serif] text-[13px] leading-4 font-bold text-white">
          ?
        </button>
      </div>
    </nav>
  );
}

/* ---------- model tree ---------- */

type Node = { icon: string; label: string; pad?: string; open?: boolean; muted?: boolean; star?: boolean; latin?: boolean };

const TREE: Node[] = [
  { icon: "plane", label: "RIGHT", latin: true },
  { icon: "plane", label: "TOP", latin: true },
  { icon: "plane", label: "FRONT", latin: true },
  { icon: "csys", label: "PRT_CSYS_DEF", latin: true },
  { icon: "revolveTree", label: "旋轉 1", open: false },
  { icon: "sketchOff", label: "草繪 1", muted: true },
  { icon: "project", label: "專案 1", open: true },
  { icon: "sketchEdit", label: "草繪 1", pad: "pl-5" },
  { icon: "copyQuilt", label: "複製 1" },
  { icon: "insertArrow", label: "在此插入" },
  { icon: "points", label: "PNT0", star: true, latin: true },
];

function ModelTree() {
  return (
    <aside className="flex w-[269px] shrink-0 flex-col pb-3">
      <div className="flex h-7 items-stretch" role="tablist">
        <button role="tab" aria-label="模型樹" className="flex w-[29px] items-center justify-center border border-b-0 border-[#c3c6c9] bg-[#fbfbfb]">
          <Icon name="tree" />
        </button>
        <button role="tab" aria-label="資料夾瀏覽器" className="flex w-[30px] items-center justify-center border border-b-0 border-l-0 border-[#c3c6c9] bg-[#eff0f2]">
          <Icon name="folders" />
        </button>
        <button role="tab" aria-label="最愛" className="flex w-[31px] items-center justify-center border border-b-0 border-l-0 border-[#c3c6c9] bg-[#eff0f2]">
          <Icon name="favorites" />
        </button>
      </div>
      <div className="flex-1 border border-r-3 border-b-2 border-[#c3c8cc]">
        <div className="flex h-[29px] items-center border-b border-[#c3c6c9] pr-1 pl-5">
          <h2 className="text-[13px] font-bold text-[#444]">模型樹</h2>
          <div className="ml-auto flex items-center gap-2">
            <button aria-label="設定"><Icon name="hammers" size="size-[17px]" /></button>
            <Caret />
            <button aria-label="顯示"><Icon name="listDoc" /></button>
            <Caret />
          </div>
        </div>
        <ul className="text-xs text-[#444]">
          <li className="flex h-[18px] items-center gap-[3px] pl-1">
            <Icon name="part" />
            <span className="text-[13px]">CURVE_PATTEN.PRT</span>
          </li>
          {TREE.map((node, i) => (
            <li key={i} className={`flex h-[18px] items-center gap-[3px] ${node.pad ?? ""} ${node.muted ? "text-[#c4c4c4]" : ""}`}>
              <span className="flex w-[21px] justify-center pl-1">
                {node.open !== undefined && (
                  <svg viewBox="0 0 9 9" className="size-[9px]">
                    <path d={node.open ? "M0 1H9L4.500 8Z" : "M1 0L8 4.500L1 9Z"} fill="#8a8a8a" />
                  </svg>
                )}
              </span>
              <Icon name={node.icon} />
              {node.star && (
                <svg viewBox="0 0 8 8" className="size-2 overflow-visible" stroke="#444">
                  <path d="M0 0L8 8M8 0L0 8M4 -0.500V8.500M-0.500 4H8.500" strokeWidth="0.800" />
                  <path d="M2 2H6V6H2Z" fill="#fff200" stroke="none" />
                </svg>
              )}
              <span className={node.latin ? "text-[13px]" : "text-xs"}>{node.label}</span>
            </li>
          ))}
        </ul>
      </div>
    </aside>
  );
}

/* ---------- graphics area ---------- */

const VIEW_TOOLS: { icon: string; label: string; pressed?: boolean; more?: boolean }[] = [
  { icon: "zoomFit", label: "重新調整" },
  { icon: "zoomIn", label: "放大" },
  { icon: "zoomOut", label: "縮小" },
  { icon: "repaint", label: "重新繪製" },
  { icon: "shade", label: "顯示樣式", more: true },
  { icon: "saved", label: "已儲存方向", more: true },
  { icon: "viewMgr", label: "視圖管理器" },
  { icon: "datumAll", label: "基準顯示", more: true },
  { icon: "planeEye", label: "平面顯示" },
  { icon: "axisEye", label: "軸顯示" },
  { icon: "pointsEye", label: "點顯示", pressed: true },
  { icon: "csysEye", label: "座標系顯示" },
  { icon: "annoEye", label: "註釋顯示", pressed: true },
  { icon: "spin", label: "旋轉中心", pressed: true },
];

function ViewToolbar() {
  return (
    <div className="mr-2 flex h-7 self-center border border-[#c3c6cc] bg-[#eff0f2] px-[5px]">
      {VIEW_TOOLS.map((tool, i) => (
        <button
          key={tool.icon}
          aria-label={tool.label}
          className={`relative flex w-[27px] items-center justify-center border-r border-[#c3c6cc] pr-1 ${i === 0 ? "border-l" : ""} ${
            tool.pressed ? "bg-[#e9eaec] inset-ring inset-ring-[#a9acb0]" : "bg-white"
          }`}
        >
          <Icon name={tool.icon} size="size-[17px]" />
          {tool.more && <span className="absolute right-0.5 bottom-1 border-2 border-transparent border-r-[#555] border-b-[#555]" />}
        </button>
      ))}
    </div>
  );
}

function Scene() {
  return (
    <svg viewBox="281 198 1008 621" preserveAspectRatio="xMidYMid slice" className="absolute inset-0 size-full" role="img" aria-label="模型">
      <defs>
        <linearGradient id="body" gradientUnits="userSpaceOnUse" x1="281" y1="700" x2="1208" y2="450">
          <stop offset="0" stopColor="#9ba6ae" />
          <stop offset="0.350" stopColor="#949ca6" />
          <stop offset="0.520" stopColor="#8b949c" />
          <stop offset="0.680" stopColor="#798289" />
          <stop offset="0.800" stopColor="#656971" />
          <stop offset="0.880" stopColor="#585d60" />
          <stop offset="1" stopColor="#4a4f53" />
        </linearGradient>
        <radialGradient id="spot">
          <stop offset="0" stopColor="#b7c2cc" />
          <stop offset="0.200" stopColor="#b2bcc6" stopOpacity="0.850" />
          <stop offset="0.500" stopColor="#a8b1ba" stopOpacity="0.400" />
          <stop offset="0.750" stopColor="#a0a9b2" stopOpacity="0.130" />
          <stop offset="1" stopColor="#9aa3ac" stopOpacity="0" />
        </radialGradient>
        <radialGradient id="rim" gradientUnits="userSpaceOnUse" cx="590" cy="903" r="690">
          <stop offset="0.900" stopColor="#3c444a" stopOpacity="0" />
          <stop offset="1" stopColor="#3c444a" stopOpacity="0.200" />
        </radialGradient>
        <linearGradient id="crease" gradientUnits="userSpaceOnUse" x1="400" y1="0" x2="900" y2="0">
          <stop offset="0" stopColor="#5f686f" stopOpacity="0" />
          <stop offset="0.500" stopColor="#5f686f" stopOpacity="0.140" />
          <stop offset="1" stopColor="#5f686f" stopOpacity="0.300" />
        </linearGradient>
        <filter id="soft" x="-20%" y="-20%" width="140%" height="140%">
          <feGaussianBlur stdDeviation="4" />
        </filter>
        <filter id="drop" x="-20%" y="-20%" width="140%" height="140%">
          <feGaussianBlur stdDeviation="2" />
        </filter>
        <clipPath id="ball">
          <circle cx="590" cy="903" r="690" />
        </clipPath>
      </defs>
      <circle cx="590" cy="903" r="690" fill="url(#body)" />
      <g clipPath="url(#ball)">
        <circle cx="651" cy="705" r="310" fill="url(#spot)" />
        <circle cx="295" cy="830" r="260" fill="url(#spot)" opacity="0.700" />
        <circle cx="265" cy="400" r="260" fill="url(#spot)" opacity="0.550" />
        <path d="M400 300Q520 272 640 274Q760 284 880 350Q1080 470 1180 700L1215 819" fill="none" stroke="url(#crease)" strokeWidth="9" filter="url(#soft)" />
        <circle cx="590" cy="903" r="690" fill="url(#rim)" />
      </g>
      <g fill="#7d8388" fontFamily="'Noto Sans', sans-serif" fontSize="11">
        <text x="1180" y="777">X.X+-0.1</text>
        <text x="1178" y="789">X.XX+-0.01</text>
        <text x="1176" y="800">X.XXX+-0.001</text>
        <text x="1179" y="812">ANG.+-0.5</text>
      </g>
      <path
        d="M281 497C380 484 480 470 571 427C640 394 678 345 680 260C680 236 684 223 704 224C740 225 800 255 862 293C960 350 1050 440 1110 541C1165 630 1205 720 1231 819"
        fill="none"
        stroke="#32cd49"
        strokeWidth="4"
      />
      <rect x="547" y="395" width="64" height="65" fill="none" stroke="#3c444a" strokeOpacity="0.550" strokeWidth="3" filter="url(#drop)" />
      <path d="M627 336L573 425" stroke="#0a0ae0" strokeWidth="1.500" />
      <path d="M571 428L573 418L578 416L580 420Z" fill="#0a0ae0" />
      <rect x="568" y="423" width="7" height="7" fill="#fff" stroke="#000" />
      <path d="M572 426L576 419" stroke="#0a0ae0" strokeWidth="1.500" />
      <g fontFamily="'Noto Sans', 'Noto Sans CJK TC', sans-serif" fontSize="12">
        <text x="629" y="340" fill="#0a0ae0">0.00</text>
        <text x="585" y="430" fill="#f7931e">PNT0</text>
        <text x="286" y="753" fill="#5f666b" fontSize="10">插入模式</text>
      </g>
      <rect x="543" y="391" width="64" height="65" fill="none" stroke="#c00000" strokeWidth="2" />
    </svg>
  );
}

function ScrollArrow({ up }: { up?: boolean }) {
  return (
    <button aria-label={up ? "向上捲動" : "向下捲動"} className="flex h-4 items-center justify-center border border-[#dcdcdc] bg-[#f6f6f6]">
      <Caret className={up ? "rotate-180 text-[#b8b8b8]" : "text-[#b8b8b8]"} />
    </button>
  );
}

function PointDialog() {
  return (
    <div
      role="dialog"
      aria-labelledby="dlg-title"
      className="absolute top-[31px] left-[578px] w-[360px] border border-[#8f9194] bg-[#c5c9cd] p-[3px] text-xs text-[#333]"
    >
      <div className="flex h-[19px] items-center bg-linear-to-b from-[#f7f7f7] to-[#e2e3e5]">
        <h2 id="dlg-title" className="flex-1 text-center text-[13px] font-bold text-[#444]">基準點</h2>
        <button aria-label="關閉" className="w-6">
          <svg viewBox="0 0 8 8" className="mx-auto size-2">
            <path d="M1 0.500L7 7.500M7 0.500L1 7.500" stroke="#555" strokeWidth="2" />
          </svg>
        </button>
      </div>
      <div className="flex h-[27px] items-end border-t border-[#c3c6c9] bg-[#eff0f2] text-[13px] font-bold" role="tablist">
        <button role="tab" className="h-5 w-[38px] border-r border-[#c3c6c9] bg-[#fbfbfb] text-[#222]">放置</button>
        <button role="tab" className="h-[18px] w-[38px] border border-l-0 border-[#c3c6c9] leading-4 text-[#777]">屬性</button>
        <span className="flex-1 self-stretch border-b border-[#c3c6c9]" />
      </div>
      <div className="flex h-[228px] gap-[5px] bg-[#fbfbfb] pt-[11px] pl-[11px]">
        <div className="flex h-[206px] w-[118px] border border-[#a9a9a9] bg-white">
          <ul className="flex-1 pt-px font-['Liberation_Serif','Noto_Sans_CJK_TC',serif]">
            <li className="flex h-[18px] items-center">
              <span className="flex w-[18px] justify-center"><Icon name="activeArrow" size="size-2.5" /></span>
              <span className="flex-1 self-stretch bg-[#b0e2ff] pl-1 leading-[18px]">PNT0</span>
            </li>
            <li className="flex h-5 items-center pl-[22px]">新點</li>
          </ul>
          <div className="flex w-[18px] flex-col justify-between border-l border-[#e2e2e2] p-px">
            <ScrollArrow up />
            <ScrollArrow />
          </div>
        </div>
        <div className="flex w-[214px] flex-col">
          <div className="pr-[7px] pl-[5px]">
            <h3 className="h-3 leading-3">參照</h3>
            <div className="h-[60px] border border-b-0 border-[#a9a9a9] bg-white p-0.5 pb-0">
              <div className="flex h-full gap-[50px] bg-[#f0eaf8] pl-3 font-['Liberation_Serif','Noto_Sans_CJK_TC',serif] leading-4 text-[#111]">
                <span>曲線:F8(複製_1)</span>
                <span>上</span>
              </div>
            </div>
          </div>
          <div className="flex h-10 items-center border-2 border-[#c00000] pr-[5px] pl-[3px] shadow-[4px_4px_4px_rgba(0,0,0,0.35),inset_4px_4px_4px_rgba(0,0,0,0.15)]">
            <label htmlFor="offset" className="w-12">位移</label>
            <span className="flex h-[19px] w-[83px] border border-[#b5b5b5] bg-white">
              <input id="offset" defaultValue="0.00" className="min-w-0 flex-1 pl-[3px] font-['Liberation_Serif',serif] text-[13px] outline-none" />
              <button aria-label="展開" className="flex w-3.5 items-center justify-center border-l border-[#b5b5b5] bg-[#eff0f2]"><Caret /></button>
            </span>
            <span className="relative ml-0.5 flex h-[19px] flex-1 border border-[#b5b5b5] bg-[#f6f6f6]">
              <select aria-label="類型" className="w-full appearance-none pl-1 leading-4 outline-none">
                <option>實際的</option>
              </select>
              <span className="pointer-events-none absolute inset-y-0 right-0 flex w-3.5 items-center justify-center border-l border-[#b5b5b5] bg-[#eff0f2]"><Caret /></span>
            </span>
          </div>
          <div className="px-[5px] pt-[15px]">
            <h3 className="leading-[18px]">位移參照</h3>
            <div className="mt-[3px] grid grid-cols-[75px_auto] items-center justify-start gap-y-[3px]">
              <label className="flex items-center gap-[7px]">
                <input type="radio" name="ref" defaultChecked className="ml-[3px] size-3 appearance-none rounded-full border border-[#888] bg-white bg-radial from-[#222] from-40% to-white to-55%" />
                曲線端點
              </label>
              <button className="h-5 w-[85px] rounded-xs border border-[#b5b5b5] bg-linear-to-b from-white to-[#e8e8e8] text-[13px] leading-4 font-bold">下一個端點</button>
              <label className="flex items-center gap-[7px]">
                <input type="radio" name="ref" className="ml-[3px] size-3 appearance-none rounded-full border border-[#888] bg-white" />
                參照
              </label>
              <input aria-label="參照集合" placeholder="按一下此處以..." className="h-[18px] w-[100px] border border-[#c9c9c9] bg-white pl-3.5 placeholder:text-[#999]" />
            </div>
          </div>
        </div>
      </div>
      <div className="flex h-[31px] items-center justify-end gap-0.5 border-t-2 border-[#c9ccd0] bg-[#eff0f2] pr-0.5 text-[13px] font-bold">
        <button className="h-5 w-[55px] rounded-xs border border-[#8cc4e8] bg-linear-to-b from-[#b8e2fb] to-[#84c9f6] leading-4">確定</button>
        <button className="h-5 w-[54px] rounded-xs border border-[#b5b5b5] bg-linear-to-b from-white to-[#ececec] leading-4">取消</button>
      </div>
    </div>
  );
}

/* ---------- status bar ---------- */

function StatusBar() {
  return (
    <footer className="flex h-11 items-start border-t-2 border-[#969696] bg-[#eff0f2] pr-[17px] pl-1.5 text-xs text-[#444]">
      <div className="flex gap-1 self-end border-r border-[#ccc] pr-[9px] pb-1">
        <button aria-label="切換導覽器" className="flex size-[22px] items-center justify-center border border-[#aaa] bg-[#e6e7e9]"><Icon name="tree" /></button>
        <button aria-label="切換瀏覽器" className="flex size-[22px] items-center justify-center border border-[#c3c6c9]"><Icon name="globe" /></button>
      </div>
      <p className="flex items-center gap-0.5 pt-1.5 pl-1 text-[11px] leading-4">
        <svg viewBox="0 0 11 12" className="h-3 w-[11px]">
          <path d="M0.500 3.500H5V0.800L10.500 6L5 11.200V8.500H0.500Z" fill="#17e05a" stroke="#111" />
        </svg>
        最多可選取3個參照，例如平面、曲面、邊或點以放置點。
      </p>
      <div className="ml-auto flex items-center gap-0.5 self-end pb-1">
        <span className="h-6 w-[37px] border-l border-[#d0d0d0]" />
        <span className="flex h-6 w-[31px] items-center gap-0.5 border-x border-[#d0d0d0] px-0.5">
          <span className="size-2.5 rounded-full bg-[#bdbdbd]" />
          <span className="size-1.5 rounded-full bg-[#d8d8d8]" />
          <span className="size-1.5 rounded-full bg-[#d8d8d8]" />
        </span>
        <button aria-label="尋找" className="flex h-[22px] w-10 items-center justify-center rounded-xs border border-[#b9b9b9] bg-linear-to-b from-white to-[#ececec]">
          <Icon name="binoculars" />
        </button>
        <span className="flex h-6 w-24 items-center border-l border-[#d0d0d0] pl-[3px]">選取了1</span>
        <span className="relative flex h-[19px] w-[166px] border border-[#b9bcc0] bg-linear-to-b from-white to-[#f0f0f0]">
          <select aria-label="篩選" className="w-full appearance-none pl-[5px] leading-4 outline-none">
            <option>全部</option>
          </select>
          <span className="pointer-events-none absolute inset-y-0 right-0 flex w-3.5 items-center justify-center border-l border-[#b9bcc0] bg-[#eff0f2]"><Caret /></span>
        </span>
      </div>
    </footer>
  );
}

export default function App() {
  return (
    <div className="flex min-h-screen flex-col bg-[#8aa0b8] font-['Noto_Sans','Noto_Sans_CJK_TC',sans-serif]">
      <div className="flex flex-1 border-r-3 border-black">
        <div className="flex min-w-0 flex-1 flex-col border-x-4 border-t border-b-4 border-[#c6cbcf] bg-[#fbfbfb]">
          <TitleBar />
          <TabBar />
          <Ribbon />
          <main className="flex flex-1">
            <div className="flex pt-[14px] pl-1">
              <ModelTree />
            </div>
            <div className="ml-1 flex min-w-0 flex-1 flex-col">
              <div className="flex flex-col pt-[7px]">
                <ViewToolbar />
              </div>
              <div className="relative flex-1 overflow-hidden">
                <Scene />
                <PointDialog />
              </div>
            </div>
          </main>
          <StatusBar />
        </div>
      </div>
      <div className="h-0.5 border-t border-[#2b3a4c]" />
    </div>
  );
}
